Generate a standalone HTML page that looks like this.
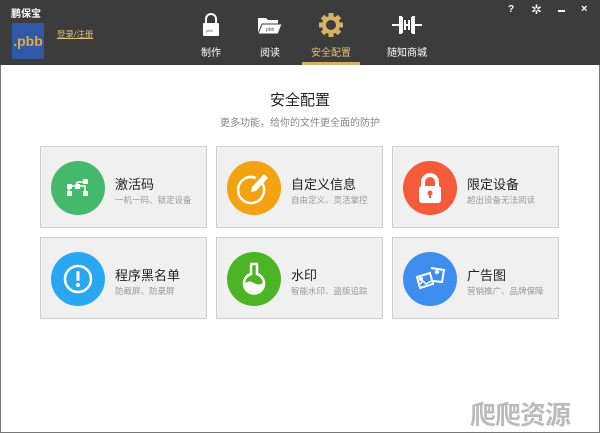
<!DOCTYPE html>
<html><head><meta charset="utf-8"><style>
*{margin:0;padding:0;box-sizing:border-box}
body{width:600px;height:433px;overflow:hidden;background:#fff;font-family:"Liberation Sans","Noto Sans CJK SC",sans-serif;position:relative}
#hd{position:absolute;left:0;top:0;width:600px;height:65px;background:#3c3c3c}
.frame{position:absolute;left:0;top:65px;width:600px;height:368px;border:1px solid #777;border-top:none}
.card{position:absolute;width:167px;height:82px;background:#f0f0f0;border:1px solid #cfcfcf}
.circ{position:absolute;left:10px;top:14px;width:54px;height:54px;border-radius:50%}
.circ svg{position:absolute;left:0;top:0}
.t{position:absolute;left:74px;top:27px;font-size:13px;color:#222}
.s{position:absolute;left:74px;top:47px;font-size:8.5px;color:#999}
.tab{position:absolute;top:44px;font-size:10px;color:#fff;text-align:center}
</style></head><body>
<div id="hd">
 <div style="position:absolute;left:11px;top:5px;color:#fff;font-size:10px;font-weight:bold">鹏保宝</div>
 <div style="position:absolute;left:12px;top:23px;width:32px;height:36px;background:#2f58a6;color:#e8a93a;font-size:14px;font-weight:bold;line-height:36px;text-align:center">.pbb</div>
 <div style="position:absolute;left:57px;top:28px;color:#e0c070;font-size:8.5px;text-decoration:underline">登录/注册</div>
 <svg style="position:absolute;left:200px;top:13px" width="22" height="24"><path d="M6 10V6a5 5 0 0 1 10 0v4" stroke="#fff" stroke-width="2" fill="none"/><rect x="3" y="10" width="16" height="13" rx="1" fill="#fff"/><text x="6" y="19" font-size="4" fill="#555">pbb</text></svg>
 <svg style="position:absolute;left:257px;top:16px" width="26" height="20"><path d="M1 2h8l2 2h10v4H5L1 18z" fill="#fff"/><path d="M5 8h20l-4 10H1z" fill="#fff" stroke="#3c3c3c"/><text x="9" y="15" font-size="5" fill="#555">pbb</text></svg>
 <svg style="position:absolute;left:318px;top:12px" width="26" height="26"><g transform="translate(13 13)" fill="#d4b464"><circle r="9"/><g id="g"><rect x="-2.5" y="-12" width="5" height="5"/></g><use href="#g" transform="rotate(45)"/><use href="#g" transform="rotate(90)"/><use href="#g" transform="rotate(135)"/><use href="#g" transform="rotate(180)"/><use href="#g" transform="rotate(225)"/><use href="#g" transform="rotate(270)"/><use href="#g" transform="rotate(315)"/><circle r="5" fill="#3c3c3c"/></g></svg>
 <svg style="position:absolute;left:391px;top:14px" width="32" height="22"><path d="M1 11h8M23 11h8M11 3v16M21 3v16M11 3h-2v16h2M21 3h2v16h-2M14 6v10M18 6v10M14 11h4" stroke="#fff" stroke-width="2" fill="none"/></svg>
 <div class="tab" style="left:201px">制作</div>
 <div class="tab" style="left:260px">阅读</div>
 <div class="tab" style="left:311px;color:#e0c070">安全配置</div>
 <div class="tab" style="left:387px">随知商城</div>
 <div style="position:absolute;left:302px;top:62px;width:58px;height:3px;background:#d4b464"></div>
 <div style="position:absolute;left:508px;top:4px;color:#fff;font-size:10px;font-weight:bold">?</div>
 <div style="position:absolute;left:531px;top:2px;color:#fff;font-size:13px">✲</div>
 <div style="position:absolute;left:558px;top:10px;width:7px;height:2px;background:#fff"></div>
 <div style="position:absolute;left:581px;top:3px;color:#fff;font-size:11px;font-weight:bold">×</div>
</div>
<div class="frame"></div>
<div style="position:absolute;left:0;width:600px;top:89px;text-align:center;font-size:15px;color:#222">安全配置</div>
<div style="position:absolute;left:0;width:600px;top:114px;text-align:center;font-size:10px;color:#888">更多功能，给你的文件更全面的防护</div>

<div class="card" style="left:40px;top:146px"><div class="circ" style="background:#45b96b"><svg width="54" height="54" fill="#fff"><rect x="16" y="23" width="5" height="5"/><rect x="16" y="30" width="5" height="5"/><rect x="24" y="23" width="5" height="5"/><rect x="32" y="18" width="5" height="5"/><rect x="32" y="30" width="5" height="5"/><path d="M18 28v2M21 25h3M26 21h8M26 21v2M29 25h5v5" stroke="#fff" stroke-width="1.5" fill="none"/></svg></div><div class="t">激活码</div><div class="s">一机一码、锁定设备</div></div>
<div class="card" style="left:216px;top:146px"><div class="circ" style="background:#f2a30f"><svg width="54" height="54"><path d="M35 22a13 13 0 1 1-6-5" stroke="#fff" stroke-width="2.5" fill="none"/><path d="M37 13l4 4-12 13-5 1 1-5z" fill="#fff"/></svg></div><div class="t">自定义信息</div><div class="s">自由定义、灵活掌控</div></div>
<div class="card" style="left:392px;top:146px"><div class="circ" style="background:#f55b3b"><svg width="54" height="54"><path d="M20 26v-5a7 7 0 0 1 14 0v5" stroke="#fff" stroke-width="4" fill="none"/><rect x="16" y="25" width="22" height="17" rx="3" fill="#fff"/><circle cx="27" cy="32" r="2.5" fill="#f55b3b"/><rect x="26" y="32" width="2" height="5" fill="#f55b3b"/></svg></div><div class="t">限定设备</div><div class="s">超出设备无法阅读</div></div>

<div class="card" style="left:40px;top:237px"><div class="circ" style="background:#2aa7f2"><svg width="54" height="54"><circle cx="27" cy="27" r="13" stroke="#fff" stroke-width="2.5" fill="none"/><rect x="25.5" y="19" width="3" height="10" rx="1" fill="#fff"/><circle cx="27" cy="33" r="2" fill="#fff"/></svg></div><div class="t">程序黑名单</div><div class="s">防截屏、防录屏</div></div>
<div class="card" style="left:216px;top:237px"><div class="circ" style="background:#4cb526"><svg width="54" height="54"><path d="M23 12h8M24 13v9a10 10 0 1 0 6 0v-9" stroke="#fff" stroke-width="2.5" fill="none"/><path d="M18 31q5-3 9 0t9 0a8 8 0 0 1-18 0z" fill="#fff"/></svg></div><div class="t">水印</div><div class="s">智能水印、盗版追踪</div></div>
<div class="card" style="left:392px;top:237px"><div class="circ" style="background:#3d8eee"><svg width="54" height="54" fill="none" stroke="#fff" stroke-width="2"><path d="M14 25l13-4 3 11-13 4z"/><path d="M28 16l13 2-2 12-9-1"/><path d="M16 33l4-4 3 3 5-3" stroke-width="1.5"/><circle cx="18" cy="27" r="1" fill="#fff"/><circle cx="34" cy="20" r="1.2" fill="#fff"/></svg></div><div class="t">广告图</div><div class="s">营销推广、品牌保障</div></div>

<div style="position:absolute;left:470px;top:395px;font-size:26px;color:#bbb;font-weight:bold;letter-spacing:-1px">爬爬资源</div>
</body></html>
